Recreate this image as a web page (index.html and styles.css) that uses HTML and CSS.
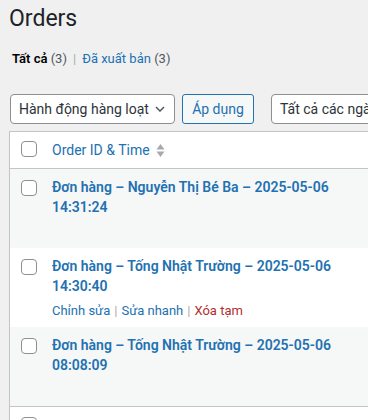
FILE: index.html
```html
<!DOCTYPE html>
<html lang="vi">
<head>
<meta charset="utf-8">
<title>Orders</title>
<link rel="stylesheet" href="styles.css">
</head>
<body>
<div class="wrap">
  <h1 class="page-title">Orders</h1>
  <ul class="subsubsub">
    <li><a class="current">Tất cả <span class="count">(3)</span></a><span class="sep">|</span></li>
    <li><a class="link">Đã xuất bản <span class="count">(3)</span></a></li>
  </ul>
  <div class="tablenav">
    <div class="select bulk">
      <span>Hành động hàng loạt</span>
      <svg class="chev" width="10" height="6" viewBox="0 0 10 6"><path d="M1 1l4 4 4-4" fill="none" stroke="#50575e" stroke-width="1.5"/></svg>
    </div>
    <button class="button">Áp dụng</button>
    <div class="select date"><span>Tất cả các ngày</span></div>
  </div>
  <table class="list">
    <thead>
      <tr>
        <td class="check"><span class="cb"></span></td>
        <th class="title-col"><a class="sort">Order ID &amp; Time
          <svg class="sorticon" width="9" height="15" viewBox="0 0 9 15"><path d="M4.5 1L8.5 6.5H0.5Z M4.5 14L8.5 8.5H0.5Z" fill="#a7aaad"/></svg></a></th>
        <th class="rest"></th>
      </tr>
    </thead>
    <tbody>
      <tr class="alt">
        <td class="check"><span class="cb"></span></td>
        <td class="title-col">
          <a class="row-title">Đơn hàng – Nguyễn Thị Bé Ba – 2025-05-06 14:31:24</a>
          <div class="row-actions hidden"><a>Chỉnh sửa</a><span class="sep">|</span><a>Sửa nhanh</a><span class="sep">|</span><a class="trash">Xóa tạm</a></div>
        </td>
        <td class="rest"></td>
      </tr>
      <tr>
        <td class="check"><span class="cb"></span></td>
        <td class="title-col">
          <a class="row-title">Đơn hàng – Tống Nhật Trường – 2025-05-06 14:30:40</a>
          <div class="row-actions"><a>Chỉnh sửa</a><span class="sep">|</span><a>Sửa nhanh</a><span class="sep">|</span><a class="trash">Xóa tạm</a></div>
        </td>
        <td class="rest"></td>
      </tr>
      <tr class="alt">
        <td class="check"><span class="cb"></span></td>
        <td class="title-col">
          <a class="row-title">Đơn hàng – Tống Nhật Trường – 2025-05-06 08:08:09</a>
          <div class="row-actions hidden"><a>Chỉnh sửa</a><span class="sep">|</span><a>Sửa nhanh</a><span class="sep">|</span><a class="trash">Xóa tạm</a></div>
        </td>
        <td class="rest"></td>
      </tr>
    </tbody>
    <tfoot>
      <tr>
        <td class="check"><span class="cb"></span></td>
        <th class="title-col"><a class="sort">Order ID &amp; Time
          <svg class="sorticon" width="9" height="15" viewBox="0 0 9 15"><path d="M4.5 1L8.5 6.5H0.5Z M4.5 14L8.5 8.5H0.5Z" fill="#a7aaad"/></svg></a></th>
        <th class="rest"></th>
      </tr>
    </tfoot>
  </table>
</div>
</body>
</html>
```

FILE: styles.css
```css
html, body {
  margin: 0;
  padding: 0;
  background: #f0f0f1;
  color: #3c434a;
  font-family: "Segoe UI", Roboto, "Noto Sans", sans-serif;
  font-size: 13px;
}

.wrap {
  padding-left: 9px;
  width: 359px;
  overflow: hidden;
}

.page-title {
  margin: 0;
  padding-top: 4px;
  font-size: 23px;
  font-weight: 400;
  line-height: 30px;
  color: #1d2327;
}

.subsubsub {
  list-style: none;
  margin: 12px 0 0 3px;
  padding: 0;
  display: flex;
  font-size: 13px;
  line-height: 26px;
  color: #50575e;
}

.subsubsub a.current {
  color: #000;
  font-weight: 600;
}

.subsubsub a.current .count,
.subsubsub a.link .count {
  font-weight: 400;
  color: #50575e;
}

.subsubsub a.link {
  color: #2271b1;
}

.subsubsub .sep {
  color: #a7aaad;
  margin: 0 6px;
}

.tablenav {
  margin-top: 22px;
  display: flex;
  align-items: center;
  height: 30px;
  white-space: nowrap;
}

.select {
  box-sizing: border-box;
  height: 30px;
  border: 1px solid #8c8f94;
  border-radius: 4px;
  background: #fff;
  color: #2c3338;
  font-size: 14px;
  display: flex;
  align-items: center;
  padding: 0 8px;
  flex-shrink: 0;
}

.select.bulk {
  margin-left: 1px;
  width: 165px;
  justify-content: space-between;
  padding-right: 9px;
}

.chev {
  display: block;
}

.button {
  box-sizing: border-box;
  margin-left: 7px;
  height: 30px;
  width: 72px;
  border: 1px solid #2271b1;
  border-radius: 3px;
  background: #f6f7f7;
  color: #2271b1;
  font-family: inherit;
  font-size: 14px;
  padding: 0;
  flex-shrink: 0;
}

.select.date {
  margin-left: 17px;
  width: 140px;
}

.list {
  margin-top: 7px;
  border-collapse: collapse;
  border: 1px solid #c3c4c7;
  background: #fff;
  width: 520px;
  table-layout: fixed;
  box-shadow: 0 1px 1px rgba(0, 0, 0, .04);
}

.list td, .list th {
  padding: 0;
  vertical-align: top;
  text-align: left;
}

.list thead tr {
  border-bottom: 1px solid #c3c4c7;
}

.list tfoot tr {
  border-top: 1px solid #c3c4c7;
}

.list thead th, .list tfoot th {
  height: 36px;
  vertical-align: middle;
  font-weight: 400;
  font-size: 14px;
}

.list tfoot th {
  height: 38px;
}

.check {
  width: 32px;
}

.title-col {
  width: 290px;
  padding: 0 10px !important;
}

.rest {
  width: auto;
}

.cb {
  display: block;
  box-sizing: border-box;
  width: 16px;
  height: 16px;
  margin: 11px 0 0 11px;
  border: 1px solid #8c8f94;
  border-radius: 4px;
  background: #fff;
}

thead .cb {
  margin-top: 9px;
}

tfoot .cb {
  margin-top: 10px;
}

.sort {
  color: #2271b1;
  display: inline-flex;
  align-items: center;
  gap: 6px;
}

.sorticon {
  display: block;
}

tbody tr.alt {
  background: #f6f7f7;
}

tbody td.title-col {
  height: 79px;
  box-sizing: border-box;
  padding-top: 8px !important;
}

tbody tr:last-child td.title-col {
  height: 80px;
}

.row-title {
  display: block;
  color: #2271b1;
  font-size: 14px;
  font-weight: 600;
  line-height: 20px;
}

.row-actions {
  margin-top: 5px;
  font-size: 13px;
  line-height: 20px;
  color: #a7aaad;
}

.row-actions.hidden {
  visibility: hidden;
}

.row-actions a {
  color: #2271b1;
}

.row-actions a.trash {
  color: #b32d2e;
}

.row-actions .sep {
  margin: 0 4px;
}
```
